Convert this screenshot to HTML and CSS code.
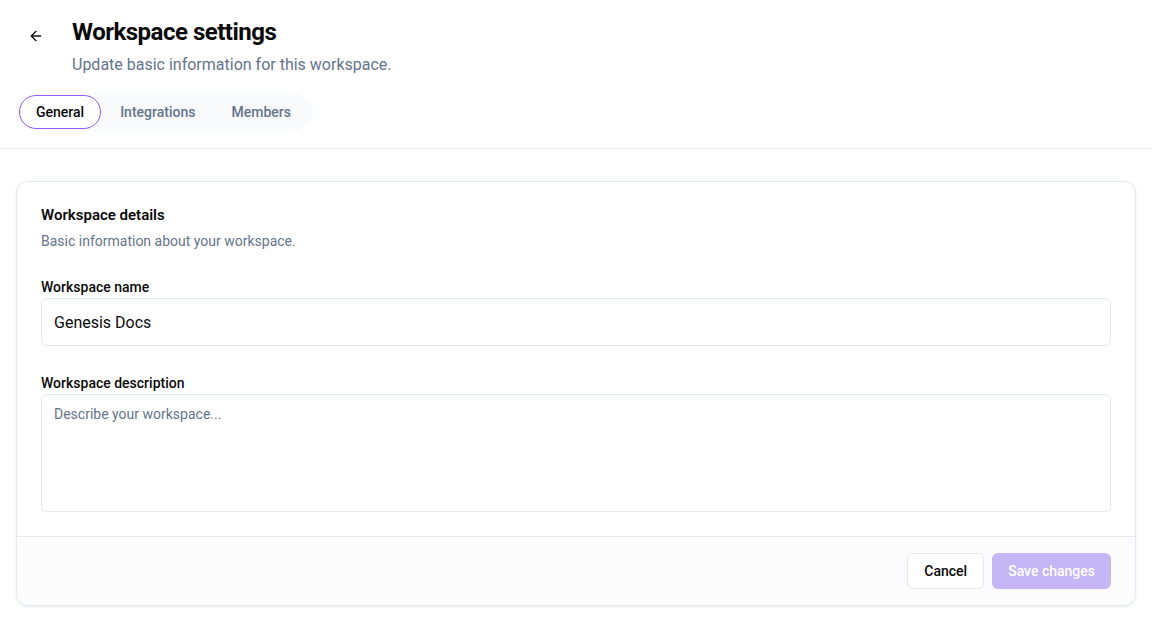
FILE: index.html
```html
<!DOCTYPE html>
<html lang="en">
  <head>
    <meta charset="UTF-8" />
    <meta name="viewport" content="width=device-width, initial-scale=1.0" />
    <title>Workspace settings</title>
    <link rel="stylesheet" href="styles.css">
  </head>
  <body>
    <header class="page-header">
      <div class="title-row">
        <button class="back-button" aria-label="Back">
          <svg width="16" height="16" viewBox="0 0 24 24" fill="none" stroke="currentColor" stroke-width="2" stroke-linecap="round" stroke-linejoin="round">
            <path d="M19 12H5" />
            <path d="M12 19l-7-7 7-7" />
          </svg>
        </button>
        <div>
          <h1 class="page-title">Workspace settings</h1>
          <p class="page-subtitle">Update basic information for this workspace.</p>
        </div>
      </div>
      <nav class="tabs">
        <button class="tab active">General</button>
        <button class="tab">Integrations</button>
        <button class="tab">Members</button>
      </nav>
    </header>

    <main class="content">
      <section class="card">
        <div class="card-body">
          <h2 class="card-title">Workspace details</h2>
          <p class="card-subtitle">Basic information about your workspace.</p>

          <div class="field">
            <label for="workspaceName">Workspace name</label>
            <input type="text" id="workspaceName" value="Genesis Docs" />
          </div>

          <div class="field">
            <label for="workspaceDescription">Workspace description</label>
            <textarea id="workspaceDescription" placeholder="Describe your workspace..."></textarea>
          </div>
        </div>
        <div class="card-footer">
          <button class="btn btn-secondary">Cancel</button>
          <button class="btn btn-primary" disabled>Save changes</button>
        </div>
      </section>
    </main>
  </body>
</html>
```

FILE: styles.css
```css
* {
  box-sizing: border-box;
}
body {
  margin: 0;
  font-family: Roboto, "Liberation Sans", sans-serif;
  color: #0a0a0a;
  background-color: #ffffff;
}
.page-header {
  padding: 18px 17px 17px;
  border-bottom: 1px solid #e2e8f0;
}
.title-row {
  display: flex;
  align-items: flex-start;
  gap: 25px;
  padding-left: 8px;
}
.back-button {
  width: 22px;
  height: 22px;
  margin-top: 7px;
  padding: 0;
  border: none;
  background: none;
  color: #111;
  display: flex;
  align-items: center;
  justify-content: center;
  cursor: pointer;
}
.page-title {
  margin: 0;
  font-size: 24px;
  font-weight: 700;
  line-height: 28px;
  letter-spacing: -0.5px;
}
.page-subtitle {
  margin: 7px 0 0;
  font-size: 16px;
  line-height: 24px;
  color: #64748b;
}
.tabs {
  display: inline-flex;
  gap: 2px;
  margin-top: 16px;
  padding: 2px 4px 2px 2px;
  background-color: #f8fafc;
  border-radius: 999px;
}
.tab {
  padding: 0 16px;
  height: 34px;
  border: 1px solid transparent;
  border-radius: 999px;
  background: none;
  font-family: inherit;
  font-size: 14px;
  font-weight: 500;
  color: #64748b;
  cursor: pointer;
}
.tab.active {
  background-color: #ffffff;
  border-color: #8b5cf6;
  color: #0a0a0a;
}
.content {
  padding: 32px 16px;
}
.card {
  border: 1px solid #e2e8f0;
  border-radius: 12px;
  background: #ffffff;
  box-shadow: 0 1px 3px rgba(15, 23, 42, 0.08);
  overflow: hidden;
}
.card-body {
  padding: 24px;
}
.card-title {
  margin: 0;
  font-size: 15px;
  font-weight: 600;
  line-height: 18px;
}
.card-subtitle {
  margin: 8px 0 0;
  font-size: 14px;
  line-height: 18px;
  color: #64748b;
}
.field {
  margin-top: 28px;
}
label {
  display: block;
  margin-bottom: 2px;
  font-size: 14px;
  font-weight: 500;
  line-height: 18px;
}
input,
textarea {
  display: block;
  width: 100%;
  border: 1px solid #e2e8f0;
  border-radius: 6px;
  font-family: inherit;
  color: #0a0a0a;
  background: #ffffff;
}
input {
  height: 48px;
  padding: 0 12px;
  font-size: 16px;
}
textarea {
  height: 118px;
  padding: 10px 12px;
  font-size: 14px;
  line-height: 18px;
  resize: none;
}
textarea::placeholder {
  color: #64748b;
}
.card-footer {
  display: flex;
  justify-content: flex-end;
  gap: 8px;
  padding: 16px 24px;
  border-top: 1px solid #e2e8f0;
  background-color: #fcfcfd;
}
.btn {
  height: 36px;
  padding: 0 16px;
  border-radius: 6px;
  font-family: inherit;
  font-size: 14px;
  font-weight: 500;
  cursor: pointer;
}
.btn-secondary {
  background: #ffffff;
  border: 1px solid #e2e8f0;
  color: #0a0a0a;
}
.btn-primary {
  background-color: #c4b5f5;
  border: none;
  color: #ffffff;
}
```
